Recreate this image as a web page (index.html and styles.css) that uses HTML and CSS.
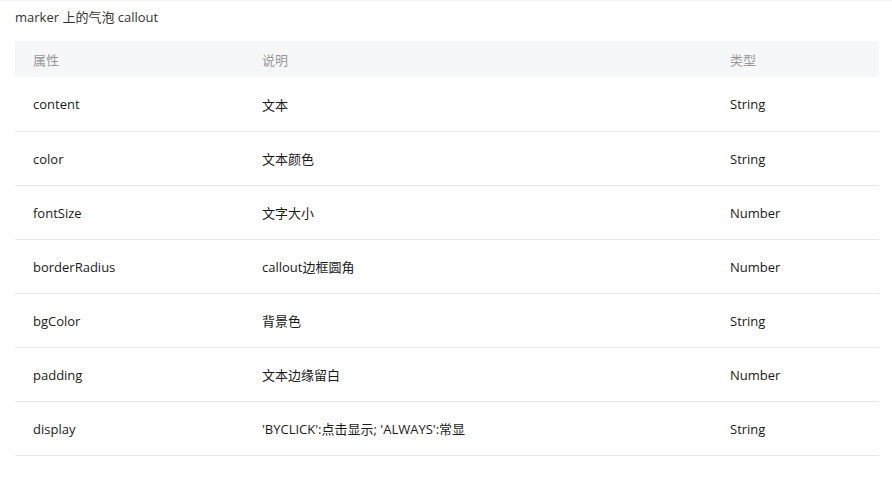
FILE: index.html
```html
<!DOCTYPE html>
<html lang="zh-CN">
<head>
<meta charset="utf-8">
<title>callout</title>
<link rel="stylesheet" href="styles.css">
</head>
<body>
<div class="page">
  <p class="title">marker 上的气泡 callout</p>
  <table class="props">
    <colgroup>
      <col class="c1"><col class="c2"><col class="c3">
    </colgroup>
    <thead>
      <tr><th>属性</th><th>说明</th><th>类型</th></tr>
    </thead>
    <tbody>
      <tr class="first"><td>content</td><td>文本</td><td>String</td></tr>
      <tr><td>color</td><td>文本颜色</td><td>String</td></tr>
      <tr><td>fontSize</td><td>文字大小</td><td>Number</td></tr>
      <tr><td>borderRadius</td><td>callout边框圆角</td><td>Number</td></tr>
      <tr><td>bgColor</td><td>背景色</td><td>String</td></tr>
      <tr><td>padding</td><td>文本边缘留白</td><td>Number</td></tr>
      <tr><td>display</td><td>'BYCLICK':点击显示; 'ALWAYS':常显</td><td>String</td></tr>
    </tbody>
  </table>
</div>
</body>
</html>
```
FILE: styles.css
```css
html, body {
  margin: 0;
  padding: 0;
  background: #fff;
}
body {
  font-family: "Open Sans", "Noto Sans CJK SC", sans-serif;
  font-size: 13px;
  color: #222;
  border-top: 1px solid #f3f3f3;
}
.page {
  padding: 0 13px 0 15px;
}
.title {
  margin: 0;
  height: 34px;
  line-height: 32px;
  font-size: 13px;
  color: #333;
}
.props {
  width: 864px;
  border-collapse: collapse;
  table-layout: fixed;
  margin-top: 6px;
}
.c1 { width: 229px; }
.c2 { width: 468px; }
.c3 { width: 167px; }
.props th {
  background: #f6f7f9;
  color: #999;
  font-weight: normal;
  text-align: left;
  height: 36px;
  padding: 0 0 0 18px;
}
.props td {
  height: 53px;
  padding: 0 0 0 18px;
  border-bottom: 1px solid #e8e8e8;
  color: #1a1a1a;
}
.props tr.first td {
  height: 54px;
}
```
